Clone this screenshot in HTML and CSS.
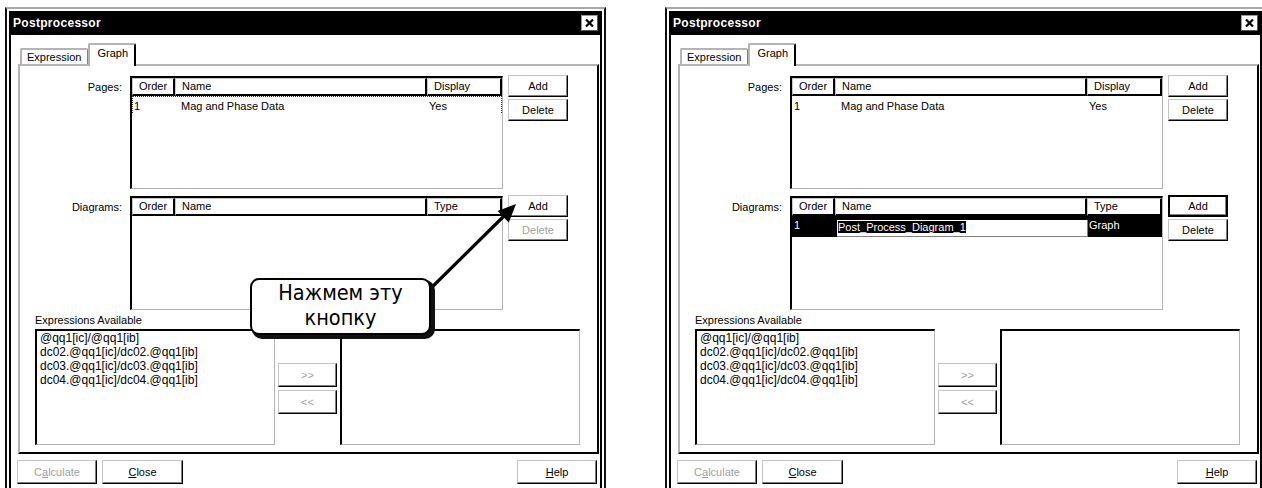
FILE: index.html
```html
<!DOCTYPE html>
<html lang="en">
<head>
    <meta charset="UTF-8">
    <title>Postprocessor</title>
    <link rel="stylesheet" href="styles.css">
</head>
<body>
<div class="screen">
    <!-- left: dialog with hint -->
    <div class="dialog">
        <div class="frame">
            <div class="titlebar">
                <span class="title">Postprocessor</span>
                <span class="close-btn">
                    <svg width="9" height="8" viewBox="0 0 9 8"><path d="M1 .5L8 7.5M8 .5L1 7.5" stroke="#000" stroke-width="2.2" fill="none"/></svg>
                </span>
            </div>
            <div class="client">
                <div class="tabs">
                    <div class="tab">Expression</div>
                    <div class="tab active">Graph</div>
                </div>
                <div class="panel">
                    <div class="table-row">
                        <div class="field-label">Pages:</div>
                        <div class="list grid-list">
                            <div class="list-head">
                                <div class="head-cell col-order">Order</div>
                                <div class="head-cell">Name</div>
                                <div class="head-cell">Display</div>
                            </div>
                            <div class="list-row focused">
                                <div class="cell">1</div>
                                <div class="cell cell-name">Mag and Phase Data</div>
                                <div class="cell">Yes</div>
                            </div>
                        </div>
                        <div class="side-buttons">
                            <button class="btn">Add</button>
                            <button class="btn">Delete</button>
                        </div>
                    </div>
                    <div class="table-row">
                        <div class="field-label">Diagrams:</div>
                        <div class="list grid-list tall">
                            <div class="list-head">
                                <div class="head-cell col-order">Order</div>
                                <div class="head-cell">Name</div>
                                <div class="head-cell">Type</div>
                            </div>
                        </div>
                        <div class="side-buttons">
                            <button class="btn">Add</button>
                            <button class="btn" disabled>Delete</button>
                        </div>
                    </div>
                    <div class="avail-label">Expressions Available</div>
                    <div class="avail">
                        <div class="list expr-list">
                            <div>@qq1[ic]/@qq1[ib]</div>
                            <div>dc02.@qq1[ic]/dc02.@qq1[ib]</div>
                            <div>dc03.@qq1[ic]/dc03.@qq1[ib]</div>
                            <div>dc04.@qq1[ic]/dc04.@qq1[ib]</div>
                        </div>
                        <div class="move-buttons">
                            <button class="btn" disabled>&gt;&gt;</button>
                            <button class="btn" disabled>&lt;&lt;</button>
                        </div>
                        <div class="list expr-list"></div>
                    </div>
                </div>
                <div class="footer">
                    <button class="btn" disabled>C<u>a</u>lculate</button>
                    <button class="btn btn-close"><u>C</u>lose</button>
                    <button class="btn btn-help"><u>H</u>elp</button>
                </div>
            </div>
        </div>

        <svg class="arrow" width="105" height="105" viewBox="0 0 105 105">
            <path d="M4 100L84 21" stroke="#000" stroke-width="3.2" fill="none"/>
            <polygon points="96,9 88.8,27.4 77.6,16" fill="#000"/>
        </svg>
        <div class="callout">Нажмем эту<br>кнопку</div>
    </div>

    <!-- right: after Add -->
    <div class="dialog">
        <div class="frame">
            <div class="titlebar">
                <span class="title">Postprocessor</span>
                <span class="close-btn">
                    <svg width="9" height="8" viewBox="0 0 9 8"><path d="M1 .5L8 7.5M8 .5L1 7.5" stroke="#000" stroke-width="2.2" fill="none"/></svg>
                </span>
            </div>
            <div class="client">
                <div class="tabs">
                    <div class="tab">Expression</div>
                    <div class="tab active">Graph</div>
                </div>
                <div class="panel">
                    <div class="table-row">
                        <div class="field-label">Pages:</div>
                        <div class="list grid-list">
                            <div class="list-head">
                                <div class="head-cell col-order">Order</div>
                                <div class="head-cell">Name</div>
                                <div class="head-cell">Display</div>
                            </div>
                            <div class="list-row">
                                <div class="cell">1</div>
                                <div class="cell cell-name">Mag and Phase Data</div>
                                <div class="cell">Yes</div>
                            </div>
                        </div>
                        <div class="side-buttons">
                            <button class="btn">Add</button>
                            <button class="btn">Delete</button>
                        </div>
                    </div>
                    <div class="table-row">
                        <div class="field-label">Diagrams:</div>
                        <div class="list grid-list tall">
                            <div class="list-head">
                                <div class="head-cell col-order">Order</div>
                                <div class="head-cell">Name</div>
                                <div class="head-cell">Type</div>
                            </div>
                            <div class="list-row selected">
                                <div class="cell">1</div>
                                <div class="cell cell-edit">
                                    <div class="edit-box"><span class="sel">Post_Process_Diagram_1</span></div>
                                </div>
                                <div class="cell">Graph</div>
                            </div>
                        </div>
                        <div class="side-buttons">
                            <button class="btn default">Add</button>
                            <button class="btn">Delete</button>
                        </div>
                    </div>
                    <div class="avail-label">Expressions Available</div>
                    <div class="avail">
                        <div class="list expr-list">
                            <div>@qq1[ic]/@qq1[ib]</div>
                            <div>dc02.@qq1[ic]/dc02.@qq1[ib]</div>
                            <div>dc03.@qq1[ic]/dc03.@qq1[ib]</div>
                            <div>dc04.@qq1[ic]/dc04.@qq1[ib]</div>
                        </div>
                        <div class="move-buttons">
                            <button class="btn" disabled>&gt;&gt;</button>
                            <button class="btn" disabled>&lt;&lt;</button>
                        </div>
                        <div class="list expr-list"></div>
                    </div>
                </div>
                <div class="footer">
                    <button class="btn" disabled>C<u>a</u>lculate</button>
                    <button class="btn btn-close"><u>C</u>lose</button>
                    <button class="btn btn-help"><u>H</u>elp</button>
                </div>
            </div>
        </div>
    </div>
</div>
</body>
</html>
```

FILE: styles.css
```css
*{
    margin: 0;
    padding: 0;
    box-sizing: border-box;
}
body{
    background-color: #fff;
    font-family: "Liberation Sans", Arial, sans-serif;
    font-size: 11px;
    color: #000;
    overflow: hidden;
}
button{
    font: inherit;
    color: inherit;
    background-color: #fff;
}
.screen{
    display: flex;
    gap: 59px;
    width: 1262px;
    height: 488px;
    padding: 7px 0 0 5px;
    overflow: hidden;
}

/* window frame */
.dialog{
    position: relative;
    flex: none;
    width: 601px;
    height: 500px;
    border: 2px solid #111;
    border-top-color: #a8a8a8;
    padding: 2px 2px 0;
}
.frame{
    height: 100%;
    border-left: 2px solid #000;
    border-right: 2px solid #000;
}
.titlebar{
    display: flex;
    align-items: center;
    justify-content: space-between;
    height: 24px;
    padding: 0 2px;
    background-color: #000;
}
.title{
    color: #fff;
    font-weight: bold;
    font-size: 12px;
    letter-spacing: .3px;
}
.close-btn{
    display: flex;
    align-items: center;
    justify-content: center;
    width: 17px;
    height: 16px;
    background-color: #fff;
    border: 1px solid #9a9a9a;
    border-right-color: #555;
    border-bottom-color: #555;
}
.client{
    padding: 8px 1px 0 7px;
}

/* tabs */
.tabs{
    display: flex;
    align-items: flex-end;
    height: 21px;
    padding-left: 2px;
}
.tab{
    height: 16px;
    line-height: 14px;
    padding: 0 6px 0 5px;
    border: 2px solid #b4b4b4;
    border-bottom-width: 0;
    border-right: 1px solid #808080;
    border-radius: 2px 2px 0 0;
}
.tab.active{
    position: relative;
    z-index: 1;
    height: 23px;
    line-height: 16px;
    margin-bottom: -2px;
    padding: 0 6px 0 7px;
    border-right: 2px solid #000;
    background-color: #fff;
}
.panel{
    height: 390px;
    padding-top: 9px;
    border: 2px solid #b4b4b4;
    border-right-color: #000;
    border-bottom-color: #000;
}

/* list views */
.table-row{
    display: flex;
    align-items: flex-start;
}
.table-row + .table-row{
    margin-top: 6px;
}
.field-label{
    width: 102px;
    margin-right: 8px;
    padding-top: 6px;
    line-height: 13px;
    text-align: right;
}
.list{
    background-color: #fff;
    border: 2px solid #000;
    border-right: 1px solid #b4b4b4;
    border-bottom: 1px solid #b4b4b4;
}
.grid-list{
    width: 373px;
    height: 113px;
    margin-top: 1px;
    margin-right: 5px;
}
.grid-list.tall{
    height: 114px;
}
.list-head,
.list-row{
    display: grid;
    grid-template-columns: 43px 252px 1fr;
}
.head-cell{
    height: 18px;
    line-height: 15px;
    padding-left: 6px;
    border: 1px solid #c8c8c8;
    border-right: 2px solid #000;
    border-bottom: 2px solid #000;
    white-space: nowrap;
}
.head-cell.col-order{
    padding-left: 0;
    text-align: center;
}
.list-row{
    height: 17px;
    line-height: 14px;
    padding-top: 2px;
    border: 1px solid transparent;
    border-bottom-width: 0;
}
.list-row.focused{
    border-color: #333;
    border-style: dotted;
}
.list-row.selected{
    height: 21px;
    padding-top: 1px;
    background-color: #000;
    color: #fff;
}
.cell{
    padding-left: 1px;
    white-space: nowrap;
}
.cell-name{
    padding-left: 5px;
}
.cell-edit{
    padding: 2px 0 0 1px;
}
.edit-box{
    height: 17px;
    padding: 1px 0 0 1px;
    line-height: 13px;
    background-color: #fff;
    color: #000;
    border-right: 1px solid #808080;
    border-bottom: 1px solid #808080;
}
.edit-box .sel{
    background-color: #000;
    color: #fff;
}

/* buttons */
.btn{
    display: block;
    text-align: center;
    border: 1px solid #c4c4c4;
    border-right-color: #000;
    border-bottom-color: #000;
    box-shadow: inset -1px -1px #808080;
    cursor: default;
}
.btn:disabled{
    color: #a0a0a0;
}
.btn.default{
    border: 2px solid #000;
}
.side-buttons{
    display: flex;
    flex-direction: column;
    gap: 2px;
}
.side-buttons .btn{
    width: 60px;
    height: 22px;
}

/* expressions */
.avail-label{
    margin-top: 3px;
    padding-left: 15px;
    line-height: 14px;
}
.avail{
    display: flex;
    align-items: flex-start;
    margin-top: 2px;
    padding-left: 15px;
}
.expr-list{
    width: 240px;
    height: 116px;
    padding-left: 3px;
    font-size: 12px;
    line-height: 14px;
    white-space: nowrap;
    overflow: hidden;
}
.move-buttons{
    display: flex;
    flex-direction: column;
    gap: 3px;
    width: 59px;
    margin: 34px 3px 0;
}
.move-buttons .btn{
    height: 24px;
}
.footer{
    display: flex;
    margin: 6px 0 0 -1px;
    padding-right: 2px;
}
.footer .btn{
    width: 80px;
    height: 24px;
}
.footer .btn-close{
    width: 81px;
    margin-left: 5px;
}
.footer .btn-help{
    margin-left: auto;
}

/* hint over the dialog */
.arrow{
    position: absolute;
    z-index: 2;
    left: 413px;
    top: 186px;
}
.callout{
    position: absolute;
    z-index: 3;
    left: 243px;
    top: 269px;
    width: 181px;
    height: 57px;
    border: 2px solid #000;
    border-radius: 9px;
    background-color: #fff;
    box-shadow: 3px 3px 0 1px #111;
    font-family: "DejaVu Sans Condensed", "DejaVu Sans", sans-serif;
    font-stretch: condensed;
    font-size: 21.5px;
    line-height: 25px;
    text-align: center;
}
```
